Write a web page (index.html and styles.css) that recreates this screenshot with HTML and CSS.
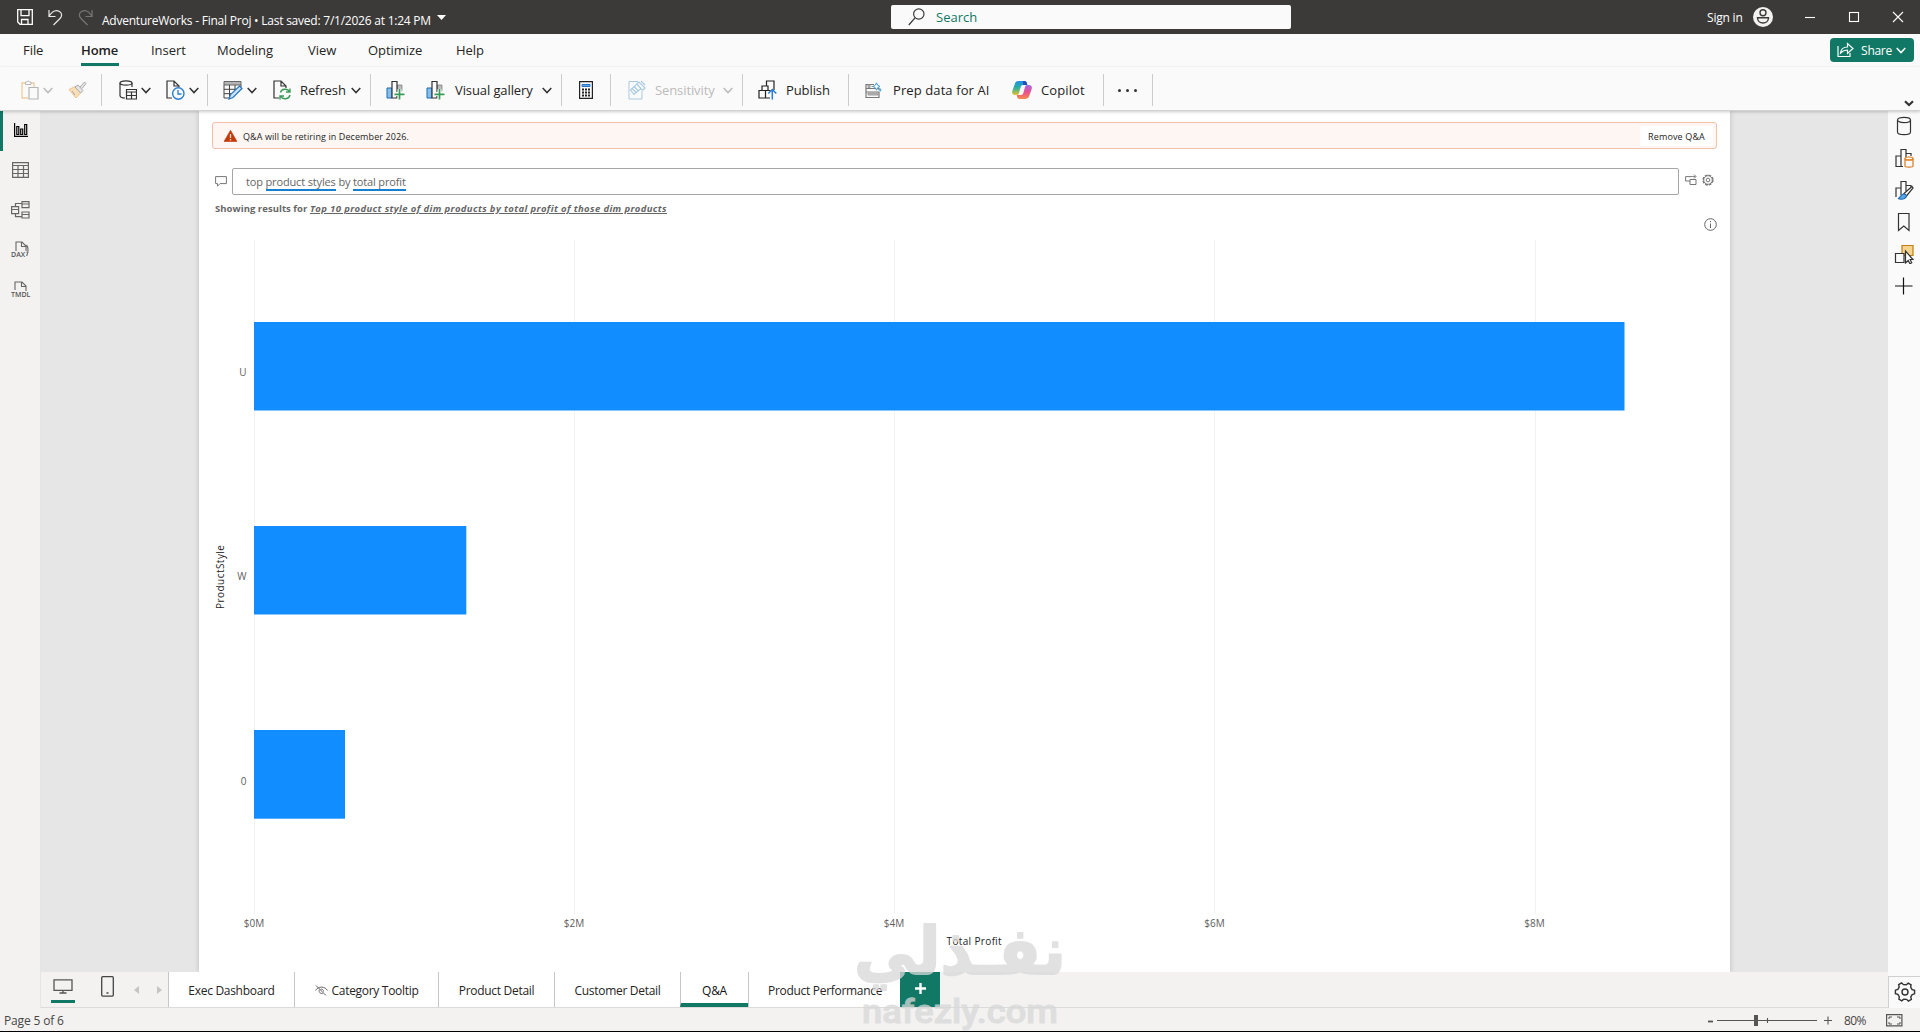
FILE: index.html
```html
<!DOCTYPE html>
<html lang="en">
<head>
<meta charset="utf-8">
<title>AdventureWorks - Final Proj</title>
<link rel="stylesheet" href="styles.css">
</head>
<body>
<svg class="defs" width="0" height="0">
  <defs>
    <linearGradient id="cop1" x1="0" y1="0" x2="0" y2="1"><stop offset="0" stop-color="#1a8fe8"/><stop offset=".5" stop-color="#2eb19c"/><stop offset="1" stop-color="#e8c228"/></linearGradient>
    <linearGradient id="cop2" x1="0" y1="0" x2="0" y2="1"><stop offset="0" stop-color="#a66be6"/><stop offset=".5" stop-color="#e8508f"/><stop offset="1" stop-color="#f58a4a"/></linearGradient>
    <symbol id="chev" viewBox="0 0 10 7"><path d="M.7 1 5 5.6 9.3 1" fill="none" stroke="currentColor" stroke-width="1.5"/></symbol>
    <symbol id="addvisual" viewBox="0 0 19 20">
      <path d="M1 8h5v10H1z" fill="#83beec" stroke="#1e6cb3"/><path d="M11.500 5H16v6h-4.500z" fill="#bcbcbc" stroke="#777" stroke-width=".7"/>
      <path d="M6 18V1.500h5V18z" fill="#fafafa" stroke="#333" stroke-width="1.200"/><path d="M13.500 9v10M8.800 14h9.500" stroke="#fafafa" stroke-width="4"/><path d="M13.500 9v10.500M8.500 14.300h10" stroke="#3b9b58" stroke-width="1.700"/>
    </symbol>
  </defs>
</svg>
<div class="app">
  <header class="titlebar">
    <svg class="save" width="16" height="16" viewBox="0 0 16 16"><path d="M.7.7h14.600v14.600H3L.7 13zM4 .7v6h8v-6M4.500 15v-4.500h6.500V15" fill="none" stroke="#fff" stroke-width="1.300"/></svg>
    <svg class="undo" width="15" height="17" viewBox="0 0 15 17"><path d="M1 1v6.500h6.500M1 7.300C4 2.500 8 .5 11.500 2.500c3 2 2.500 5 .5 7L5.500 16" fill="none" stroke="#e8e8e8" stroke-width="1.200"/></svg>
    <svg class="redo" width="15" height="17" viewBox="0 0 15 17"><path d="M14 1v6.500H7.500M14 7.300C11 2.500 7 .5 3.500 2.500c-3 2-2.500 5-.5 7L9.500 16" fill="none" stroke="#777674" stroke-width="1.200"/></svg>
    <span class="doc">AdventureWorks - Final Proj • Last saved: 7/1/2026 at 1:24 PM</span>
    <svg class="caret" width="9" height="5" viewBox="0 0 9 5"><path d="M0 0h9L4.500 5z" fill="#fff"/></svg>
    <div class="search">
      <svg width="17" height="18" viewBox="0 0 17 18"><circle cx="10.800" cy="6" r="5.200" fill="none" stroke="#3b3a39" stroke-width="1.200"/><path d="M7 9.800.8 17" stroke="#3b3a39" stroke-width="1.300"/></svg>
      <span>Search</span>
    </div>
    <div class="account">
      <span>Sign in</span>
      <svg width="20" height="20" viewBox="0 0 20 20"><circle cx="10" cy="10" r="10" fill="#f3f2f1"/><circle cx="10" cy="5.700" r="3" fill="none" stroke="#3b3a39" stroke-width="1.400"/><path d="M4.500 10.700h11c0 7-11 7-11 0z" fill="none" stroke="#3b3a39" stroke-width="1.400"/></svg>
    </div>
    <svg class="win" width="100" height="12" viewBox="0 0 100 12" fill="none" stroke="#fff" stroke-width="1.100"><path d="M1 6.500h10"/><rect x="45.500" y="1.500" width="9" height="9"/><path d="m89 1 10 10M99 1 89 11"/></svg>
  </header>

  <nav class="menu">
    <span class="m-file">File</span><span class="m-home active">Home</span><span class="m-insert">Insert</span><span class="m-model">Modeling</span><span class="m-view">View</span><span class="m-opt">Optimize</span><span class="m-help">Help</span>
    <button class="share">
      <svg width="17" height="16" viewBox="0 0 17 16" fill="none" stroke="#fff" stroke-width="1.200"><path d="M1 4v10.500h12V11M3.500 11C4 7 6.500 5 10.500 5V1.500l5.500 5-5.500 5V8C7.500 8 5.500 9 3.500 11z"/></svg>
      <span>Share</span>
      <svg class="chev" width="10" height="7"><use href="#chev"/></svg>
    </button>
  </nav>

  <div class="ribbon">
    <div class="group g-clip">
      <svg width="18" height="20" viewBox="0 0 18 20" fill="none"><path d="M4.500 3H1v15h6M10 3h3v4" stroke="#f2cda0" stroke-width="1.300"/><path d="M4.500 4.500h5.500V2H8.500a1.300 1.300 0 0 0-2.500 0H4.500z" stroke="#b8b8b8"/><path d="M8 7.500h9V19H8z" stroke="#b5b5b5" stroke-width="1.200"/></svg>
      <svg class="chev dim" width="10" height="7"><use href="#chev"/></svg>
      <svg class="brush" width="19" height="18" viewBox="0 0 19 18"><path d="M1 8.500 8 5l5 6.500L8 17z" fill="#f9dfb8" stroke="#efc58d"/><path d="m7 6 3-2 5 5.500-2.500 2.500zM12 6l4.500-5L18 2.500 14 7.500M4 10l3 4" fill="#e5e5e5" stroke="#aaa"/></svg>
    </div>
    <div class="group g-data">
      <svg width="18" height="20" viewBox="0 0 18 20" fill="none" stroke="#333" stroke-width="1.200"><ellipse cx="7" cy="3" rx="6" ry="2.200"/><path d="M1 3v12.500c0 1.500 2.500 2.500 5 2.500M13 3v4"/><path d="M7.500 9.500h10V19h-10zM7.500 12h10M7.500 15.500h10M12.500 12v7"/></svg>
      <svg class="chev" width="10" height="7"><use href="#chev"/></svg>
      <svg class="recent" width="19" height="20" viewBox="0 0 19 20" fill="none"><path d="M6 18H1V1h7l5 5v1M8 1v5h5" stroke="#333" stroke-width="1.200"/><circle cx="12.300" cy="13.500" r="5.700" stroke="#2b7cd3" stroke-width="1.400"/><path d="M12 10v4h3.500" stroke="#2b7cd3" stroke-width="1.300"/></svg>
      <svg class="chev" width="10" height="7"><use href="#chev"/></svg>
    </div>
    <div class="group g-query">
      <svg width="20" height="20" viewBox="0 0 20 20"><path d="M1 1.500h17V5H1z" fill="#b5b5b5" stroke="#666"/><path d="M1 5v13h5M1 9.300h14M1 13.700h8M6.500 5v13M12 5v6M18 5v2" fill="none" stroke="#444"/><path d="m6 19 1.500-4.500L16.500 6 19 8.500l-9 9z" fill="#cbe3f7" stroke="#2675c2" stroke-width="1.200"/></svg>
      <svg class="chev" width="10" height="7"><use href="#chev"/></svg>
      <svg class="refresh" width="18" height="20" viewBox="0 0 18 20" fill="none"><path d="M6 18H1V1h7l5 5v2M8 1v5h5" stroke="#333" stroke-width="1.200"/><path d="M7.500 12.500c1-4 7-4.500 9-.8M17 8.500V12h-4M17 15c-1 4.500-7 5-9.300 1.300M7 19.500V16h4" stroke="#3b9b58" stroke-width="1.400"/></svg>
      <span class="t-refresh">Refresh</span>
      <svg class="chev" width="10" height="7"><use href="#chev"/></svg>
    </div>
    <div class="group g-visual">
      <svg width="19" height="20"><use href="#addvisual"/></svg>
      <svg class="second" width="19" height="20"><use href="#addvisual"/></svg>
      <span class="t-gallery">Visual gallery</span>
      <svg class="chev" width="10" height="7"><use href="#chev"/></svg>
    </div>
    <div class="group g-calc">
      <svg width="14" height="18" viewBox="0 0 14 18"><path d="M.6.6h12.800v16.800H.6z" fill="none" stroke="#222" stroke-width="1.200"/><path d="M3 3.500h8v2H3z" fill="#5ba7e6" stroke="#2675c2"/><path d="M3 8.500h8M3 11.500h8M3 14.500h8" stroke="#222" stroke-width="1.800" stroke-dasharray="2 1"/></svg>
    </div>
    <div class="group g-sens">
      <svg width="18" height="20" viewBox="0 0 18 20" fill="none" stroke="#a9cbe2"><path d="M10 1.500H1V19h13v-8"/><path d="M2.500 10 9 4l4 4.500-7 6zM9 4l2-2 6 6-2 2-3-1M13 1l4 4M4.500 9l4 4M6.500 7l4 4" stroke-width="1.200"/></svg>
      <span class="t-sens">Sensitivity</span>
      <svg class="chev dim" width="10" height="7"><use href="#chev"/></svg>
    </div>
    <div class="group g-pub">
      <svg width="19" height="20" viewBox="0 0 19 20" fill="none" stroke="#222" stroke-width="1.200"><path d="M1 10.500h6.500V18H1zM4 10.500V6h6v4.500M8.500 6V1h7.500v9M7.500 10.500h5M7.500 18H12"/><path d="M14.300 19.500V9.500M10.300 13.500l4-4 4 4" stroke="#2b7cd3" stroke-width="1.500"/></svg>
      <span class="t-pub">Publish</span>
    </div>
    <div class="group g-ai">
      <svg width="17" height="17" viewBox="0 0 17 17"><path d="M9 2.500H1v4h13V8M1 10h13v5.500H1zM1 10V6.500" fill="none" stroke="#777" stroke-width="1.200"/><path d="M3 3h2v2.500H3zM6.500 4.500H8M3 11h10v2H3z" stroke="#999" fill="#bbb"/><path d="m11.500.8 1.200 2.500L15 4.500l-2.300 1.200-1.200 2.500-1.200-2.500L8 4.500l2.300-1.200z" fill="#fff" stroke="#389bd9"/><path d="m15.200 6 .6 1.400 1.200.6-1.200.6-.6 1.400-.6-1.400-1.200-.6 1.200-.6z" fill="#389bd9"/></svg>
      <span class="t-prep">Prep data for AI</span>
      <svg class="copilot" width="20" height="18" viewBox="0 0 20 18"><path d="M7 0h5.500c1.500 0 2 1 2.300 2l.5 2H11c-1.500 0-2 1-2.500 2.500L7 12c-.4 1.500-1.200 2-2.500 2H3c-2.500 0-3.300-2-2.700-4L3 2.500C3.500 1 5 0 7 0z" fill="url(#cop1)"/><path d="M13 18H7.500c-1.500 0-2-1-2.300-2l-.5-2H9c1.500 0 2-1 2.500-2.500L13 6c.4-1.500 1.200-2 2.500-2H17c2.500 0 3.300 2 2.700 4L17 15.500c-.5 1.500-2 2.500-4 2.500z" fill="url(#cop2)"/><path d="M11 0h1.500c1.500 0 2 1 2.300 2l.5 2H11z" fill="#2050b8"/></svg>
      <span class="t-cop">Copilot</span>
    </div>
    <div class="group g-more"><i></i><i></i><i></i></div>
    <svg class="collapse" width="10" height="7" viewBox="0 0 10 7"><path d="M1 1.200 5 5l4-3.800" fill="none" stroke="#333" stroke-width="2.200"/></svg>
  </div>

  <div class="main">
    <aside class="rail-left">
      <div class="view current"><svg width="14" height="14" viewBox="0 0 14 14" fill="none" stroke="#000" stroke-width="1.200"><path d="M.6 0v13.400H14M2.800 3.500h2v8h-2zM6.700 6h2v5.500h-2zM10.700 1.500h2v10h-2z"/></svg></div>
      <div class="view"><svg width="17" height="16" viewBox="0 0 17 16" fill="none" stroke="#666" stroke-width="1.200"><path d="M.6.6h15.800v14.800H.6zM.6 3.500h15.800M.6 7.500h15.800M.6 11.500h15.800M6 3.500v12M11.500 3.500v12"/></svg></div>
      <div class="view"><svg width="19" height="18" viewBox="0 0 19 18" fill="none" stroke="#666" stroke-width="1.200"><path d="M.6 5.600h7v7h-7zM.6 8.500h7M11 .6h7v6h-7zM11 3h7M11 11h7v6h-7zM11 13.500h7M4.500 5.600V2.500H11M4.500 12.600v3H11"/></svg></div>
      <div class="view"><svg width="20" height="18" viewBox="0 0 20 18" fill="none" stroke="#666" stroke-width="1.100"><path d="M5 10V1h6l4 4v7M10.500 1v4.500H15M15.500 4c2 2 2 8 0 11"/><text x="0" y="15.500">DAX</text></svg></div>
      <div class="view"><svg width="20" height="18" viewBox="0 0 20 18" fill="none" stroke="#666" stroke-width="1.100"><path d="M4 9V1h7l4 4v5M10.500 1v4.500H15"/><text x="0" y="16">TMDL</text></svg></div>
    </aside>

    <section class="stage">
      <div class="canvas">
        <div class="paper">
          <div class="banner">
            <svg width="13" height="12" viewBox="0 0 13 12"><path d="M6.500.3 13 11.500H0z" fill="#c4390a" stroke="#c4390a" stroke-width=".6"/><path d="M6.500 4v4M6.500 9v1.400" stroke="#fbd9cc" stroke-width="1.300"/></svg>
            <span class="b-text">Q&amp;A will be retiring in December 2026.</span>
            <button class="remove"><span>Remove Q&amp;A</span></button>
          </div>
          <div class="ask">
            <svg width="12" height="11" viewBox="0 0 12 11"><path d="M.6.6h10.800v7H5l-2.500 2.600V7.600H.6z" fill="none" stroke="#777"/></svg>
            <div class="question"><p>top <u>product styles</u> by <u>total profit</u></p></div>
            <svg class="turn" width="12" height="12" viewBox="0 0 12 12" fill="none" stroke="#777"><path d="M5 7H.6V2.600h7M5 5.500h6V10.500H5zM7.500 2.600h3M9 .5l2 2-2 2"/></svg>
            <svg class="cog" width="12" height="12" viewBox="0 0 12 12" fill="none" stroke="#777"><circle cx="6" cy="6" r="5" stroke-dasharray="2.700 1.230" stroke-width="1.300"/><circle cx="6" cy="6" r="4.300"/><circle cx="6" cy="6" r="1.800"/></svg>
          </div>
          <p class="results">Showing results for <em>Top 10 product style of dim products by total profit of those dim products</em></p>
          <div class="info"><svg width="13" height="13" viewBox="0 0 13 13" fill="none" stroke="#666"><circle cx="6.500" cy="6.500" r="5.800"/><path d="M6.500 5.500V10M6.500 3v1.200"/></svg></div>
          <svg class="chart" width="1531" height="734" viewBox="199 238 1531 734">
            <path d="M254.500 240v674M574.500 240v674M894.500 240v674M1214.500 240v674M1535.500 240v674" stroke="#f2f2f2"/>
            <g fill="#118dff"><rect x="254" y="322" width="1370.500" height="88.500"/><rect x="254" y="526" width="212.300" height="88.500"/><rect x="254" y="730" width="91" height="88.700"/></g>
            <g class="cat"><text x="246.500" y="376">U</text><text x="246.500" y="580">W</text><text x="246.500" y="785">0</text></g>
            <g class="tick"><text x="254" y="927">$0M</text><text x="574" y="927">$2M</text><text x="894" y="927">$4M</text><text x="1214.500" y="927">$6M</text><text x="1534.500" y="927">$8M</text></g>
            <g class="axis"><text x="974" y="945" textLength="55">Total Profit</text><text transform="translate(224 577) rotate(-90)" textLength="64">ProductStyle</text></g>
          </svg>
        </div>
      </div>
      <div class="tabs">
        <div class="devices">
          <span class="desktop"><svg width="20" height="15" viewBox="0 0 20 15" fill="none" stroke="#555" stroke-width="1.300"><path d="M1 .8h18v10.500H1zM10 11.500V14M6.500 14h7"/></svg></span>
          <svg class="phone" width="13" height="21" viewBox="0 0 13 21"><rect x=".7" y=".7" width="11.600" height="19.400" rx="1" fill="none" stroke="#444" stroke-width="1.300"/><path d="M5.500 17h2" stroke="#444" stroke-width="1.500"/></svg>
          <svg class="arrows" width="28" height="8" viewBox="0 0 28 8"><path d="M5 0v8L0 4zM23 0v8l5-4z" fill="#c5c5c5"/></svg>
        </div>
        <div class="tab w1"><span>Exec Dashboard</span></div>
        <div class="tab w2"><svg width="13" height="11" viewBox="0 0 13 11" fill="none" stroke="#666"><path d="M.5 5.500C3 1 10 1 12.500 5.500M1 .5 11 10.500M4.500 4.500C3 7 6 9.500 8 8M5.500 4.500a2 2 0 0 1 3 2"/></svg><span>Category Tooltip</span></div>
        <div class="tab w3"><span>Product Detail</span></div>
        <div class="tab w4"><span>Customer Detail</span></div>
        <div class="tab w5 on"><span>Q&amp;A</span></div>
        <div class="tab w6"><span>Product Performance</span></div>
        <div class="add"><svg width="11" height="11" viewBox="0 0 11 11"><path d="M5.500 0v11M0 5.500h11" stroke="#fff" stroke-width="2.400"/></svg></div>
      </div>
    </section>

    <aside class="rail-right">
      <svg width="20" height="20" viewBox="0 0 20 20" fill="none" stroke="#333" stroke-width="1.200"><ellipse cx="10" cy="4" rx="6.500" ry="2.600"/><path d="M3.500 4v12c0 3.500 13 3.500 13 0V4"/></svg>
      <svg width="20" height="20" viewBox="0 0 20 20" fill="none" stroke="#333" stroke-width="1.200"><path d="M7 18.500H2V8h5M9 18.500H7V1.500h5V9M12 5.500h5V8"/><path d="M11 10.500v7.500c0 1.500 8 1.500 8 0v-7.500M11 12h8" stroke="#dc7a1c"/><ellipse cx="15" cy="10.500" rx="4" ry="1.500" stroke="#dc7a1c"/></svg>
      <svg width="20" height="20" viewBox="0 0 20 20" fill="none" stroke="#333" stroke-width="1.200"><path d="M2 17V8h5M7 15V1.500h5V11M12 5.500h5V8"/><path d="m10 13.500 8-7 1 1.500-6.500 8z" fill="#fff"/><path d="M4 18.500c2.500 0 2-4 5.500-4.500 2.500 0 4 2 2 3.700C9.500 19.500 6 19.500 4 18.500z" fill="#5ba7e6" stroke="#1e6cb3"/></svg>
      <svg width="20" height="20" viewBox="0 0 20 20" fill="none" stroke="#333" stroke-width="1.200"><path d="M4.500 1.500h10.500v17l-5.200-4.500-5.300 4.500z"/></svg>
      <svg width="20" height="20" viewBox="0 0 20 20" fill="none" stroke="#333" stroke-width="1.200"><path d="M8 1.500h11v10H8z" fill="#f5d58e" stroke="#c47d14"/><path d="M1.500 9.500H10v9H1.500z" fill="#fafafa"/><path d="M11.500 7v12l2.700-2.500 1.700 3.300 1.800-1-1.600-3.300H19z" fill="#fff"/></svg>
      <svg width="20" height="20" viewBox="0 0 20 20" fill="none" stroke="#111" stroke-width="1.200"><path d="M9.500 1.500v17M1 10h17.500"/></svg>
      <div class="settings"><svg width="22" height="22" viewBox="0 0 22 22" fill="none" stroke="#333" stroke-width="1.400"><path d="m8.500 4 .8-2.300h3.400l.8 2.300 2.500 1.400 2.500-.6 1.700 3-1.700 1.800v2.800l1.700 1.800-1.700 3-2.500-.6-2.500 1.400-.8 2.300H9.300L8.500 18 6 16.600l-2.500.6-1.700-3 1.700-1.800V9.600L1.800 7.800l1.700-3 2.500.6z" transform="rotate(30 11 11)"/><circle cx="11" cy="11" r="3"/></svg></div>
    </aside>
  </div>

  <footer class="status">
    <span class="pages">Page 5 of 6</span>
    <svg class="slider" width="124" height="12" viewBox="0 0 124 12" stroke="#555"><path d="M0 6.500h5" stroke-width="1.800"/><path d="M9 5.500h100M59.500 3v5M116 5.500h8M120 1.500v8" stroke-width="1.100"/><path d="M48 0v11" stroke-width="4"/></svg>
    <span class="pct">80%</span>
    <svg class="fit" width="17" height="13" viewBox="0 0 17 13" fill="none" stroke="#555"><path d="M.6.6h15.300v11.300H.6z" stroke-width="1.200"/><path d="M3 5V3h3M11 3h3v2M3 8v2h3M11 10h3V8"/></svg>
  </footer>
  <div class="watermark">
    <svg width="230" height="120" viewBox="850 912 230 120"><text class="wm-ar" x="960" y="974" textLength="212" lengthAdjust="spacingAndGlyphs" direction="rtl">نفـذلي</text><text class="wm-en" x="960" y="1023" textLength="196" lengthAdjust="spacingAndGlyphs">nafezly.com</text></svg>
  </div>
</div>
</body>
</html>
```
FILE: styles.css
```css
* { box-sizing: border-box; }
body { margin: 0; background: #fff; font-family: "Open Sans", "Noto Sans", sans-serif; font-size: 13px; color: #252423; overflow: hidden; }
p { margin: 0; }
button { border: 0; padding: 0; font: inherit; color: inherit; }
svg { display: block; flex: none; }
span { white-space: nowrap; flex: none; }
.defs { position: absolute; }
.app { position: relative; width: 1920px; height: 1032px; display: flex; flex-direction: column; border-bottom: 1px solid #000; }

.titlebar { height: 34px; background: #3b3a39; color: #fff; display: flex; align-items: center; padding-left: 17px; flex: none; }
.titlebar .undo { margin-left: 15px; }
.titlebar .redo { margin-left: 15px; }
.doc { width: 329px; margin: 6px 0 0 9px; font-size: 12px; letter-spacing: -.23px; }
.caret { margin-left: 6px; }
.search { width: 400px; height: 24px; margin-left: 445px; background: #fafafa; border-radius: 2px; display: flex; align-items: center; gap: 11px; padding-left: 17px; color: #117865; }
.account { margin-left: 416px; display: flex; align-items: center; gap: 9px; font-size: 12px; }
.account span { width: 37px; letter-spacing: -.2px; }
.win { margin-left: 31px; }

.menu { height: 33px; background: #fafafa; display: flex; align-items: center; flex: none; padding-left: 23px; }
.menu > span { height: 31px; line-height: 30px; letter-spacing: -.05px; }
.m-file { width: 58px; }
.menu .m-home { width: 38px; margin-right: 32px; font-weight: 600; color: #222; border-bottom: 3px solid #117865; letter-spacing: -.1px; }
.m-insert { width: 66px; }
.m-model { width: 91px; }
.m-view { width: 60px; }
.m-opt { width: 88px; }
.m-help { width: 40px; }
.share { width: 84px; height: 24px; margin: -1px 6px 0 auto; background: #117865; border-radius: 4px; color: #fff; display: flex; align-items: center; padding-left: 7px; font-size: 12px; }
.share span { width: 31px; margin: 0 4px 0 7px; letter-spacing: -.3px; }

.ribbon { height: 44px; background: #fafafa; border-bottom: 1px solid #d2d2d2; box-shadow: 0 1px 3px #0003; display: flex; align-items: center; padding-top: 3px; position: relative; z-index: 2; flex: none; }
.group { height: 32px; border-right: 1px solid #ccc; display: flex; align-items: center; flex: none; }
.group .chev { margin-left: 4px; color: #333; }
.group .dim { color: #bbb; }
.g-clip { width: 102px; padding-left: 21px; }
.brush { margin-left: 15px; }
.g-data { width: 106px; padding-left: 17px; }
.recent { margin-left: 15px; }
.g-query { width: 163px; padding-left: 15px; }
.group .refresh { margin-left: 16px; }
.t-refresh { width: 47px; margin-left: 9px; }
.g-visual { width: 191px; padding-left: 15px; }
.second { margin-left: 21px; }
.t-gallery { width: 83px; margin-left: 10px; }
.g-calc { width: 49px; padding-left: 17px; }
.g-sens { width: 132px; padding-left: 17px; color: #bbb; }
.t-sens { width: 64px; margin-left: 9px; }
.g-pub { width: 106px; padding-left: 15px; }
.t-pub { margin-left: 9px; }
.g-ai { width: 255px; padding-left: 16px; }
.t-prep { width: 98px; margin-left: 11px; }
.copilot { margin-left: 21px; }
.t-cop { margin-left: 9px; }
.g-more { width: 49px; justify-content: center; gap: 5px; padding-right: 2px; }
.g-more i { width: 3px; height: 3px; border-radius: 50%; background: #333; }
.collapse { margin: 26px 6px 0 auto; }
.group > span { letter-spacing: -.1px; }
.group > .t-prep, .group > .t-cop { letter-spacing: .1px; }

.main { height: 897px; display: flex; flex: none; }
.rail-left { width: 41px; background: #f3f2f1; border-right: 1px solid #e6e5e4; display: flex; flex-direction: column; flex: none; }
.view { height: 40px; display: flex; align-items: center; justify-content: center; padding: 0 0 3px 1px; }
.current { border-left: 3px solid #117865; padding: 0 2px 2px 0; }
.view text { font: 600 7px "Open Sans", sans-serif; fill: #555; stroke: #f3f2f1; stroke-width: 2px; paint-order: stroke; }

.stage { width: 1847px; display: flex; flex-direction: column; flex: none; }
.canvas { height: 861px; background: #e6e6e6; padding-left: 158px; }
.paper { width: 1531px; height: 861px; background: #fff; box-shadow: 0 0 5px #0003; display: flex; flex-direction: column; clip-path: inset(0 -8px 0 -8px); }
.banner { width: 1505px; height: 27px; margin: 11px 0 0 13px; border: 1px solid #f4bfab; border-radius: 3px; background: #fdf6f3; display: flex; align-items: center; padding: 0 3px 0 11px; font-size: 9px; flex: none; }
.b-text { margin: 1px 0 0 6px; letter-spacing: .09px; }
.remove { width: 73px; height: 20px; margin-left: auto; background: #fff; padding: 1px 0 0; letter-spacing: .13px; }
.ask { display: flex; align-items: center; margin: 19px 0 0 16px; height: 27px; flex: none; }
.question { width: 1447px; height: 27px; margin: 0 6px 0 5px; border: 1px solid #a6a6a6; border-radius: 2px; padding: 5px 13px; font-size: 11px; line-height: 16px; color: #666; letter-spacing: -.15px; }
.question u { display: inline-block; height: 17px; text-decoration: none; border-bottom: 2px solid #1680d0; }
.turn, .cog { margin-bottom: 3px; }
.cog { margin-left: 5px; }
.results { margin: 6px 0 0 16px; height: 16px; font-size: 9.500px; line-height: 16px; font-weight: 700; color: #666; white-space: nowrap; letter-spacing: .05px; flex: none; }
.results em { text-decoration: underline; letter-spacing: .37px; }
.info { height: 21px; display: flex; justify-content: flex-end; padding: 1px 13px 0 0; flex: none; }
.chart { font-size: 10px; }
.cat { text-anchor: end; fill: #605e5c; }
.tick { text-anchor: middle; fill: #605e5c; }
.axis { text-anchor: middle; fill: #252423; }

.tabs { height: 36px; background: #f3f2f1; display: flex; border-bottom: 1px solid #dcdbda; flex: none; }
.devices { width: 127px; display: flex; padding-left: 10px; flex: none; }
.desktop { width: 24px; height: 31px; padding: 7px 0 0 2px; border-bottom: 3px solid #117865; }
.phone { margin: 4px 0 0 26px; }
.arrows { margin: 14px 0 0 20px; }
.tab { background: #fff; border-left: 1px solid #c8c6c4; display: flex; align-items: center; justify-content: center; padding-top: 2px; gap: 4px; font-size: 12px; letter-spacing: -.3px; flex: none; }
.w1 { width: 126px; }
.w2 { width: 144px; }
.w3 { width: 116px; }
.w4 { width: 126px; }
.w5 { width: 68px; }
.w6 { width: 152px; justify-content: flex-start; padding-left: 19px; }
.on { border-bottom: 4px solid #117865; padding-top: 6px; color: #111; }
.add { width: 40px; background: #117865; display: flex; align-items: center; justify-content: center; padding-bottom: 2px; }

.rail-right { width: 32px; background: #fafafa; display: flex; flex-direction: column; align-items: center; gap: 12px; padding-top: 5px; flex: none; }
.settings { width: 32px; height: 32px; margin-top: auto; border: solid #d2d0ce; border-width: 1px 0 0 1px; display: flex; align-items: center; justify-content: center; padding-bottom: 1px; }

.status { height: 23px; background: #f3f2f1; color: #484644; display: flex; align-items: center; padding: 2px 17px 0 4px; font-size: 12px; flex: none; }
.pages { letter-spacing: -.15px; }
.slider { margin-left: auto; }
.pct { width: 24px; margin: 0 18px 0 12px; letter-spacing: -.6px; }
.watermark { position: absolute; left: 850px; top: 912px; z-index: 3; opacity: .75; }
.watermark text { fill: #d8d8d8; stroke: #d8d8d8; text-anchor: middle; }
.wm-ar { font: 700 66px "DejaVu Sans", sans-serif; stroke-width: 2px; stroke-linejoin: round; }
.wm-en { font: 500 34px "Roboto", sans-serif; }
```
